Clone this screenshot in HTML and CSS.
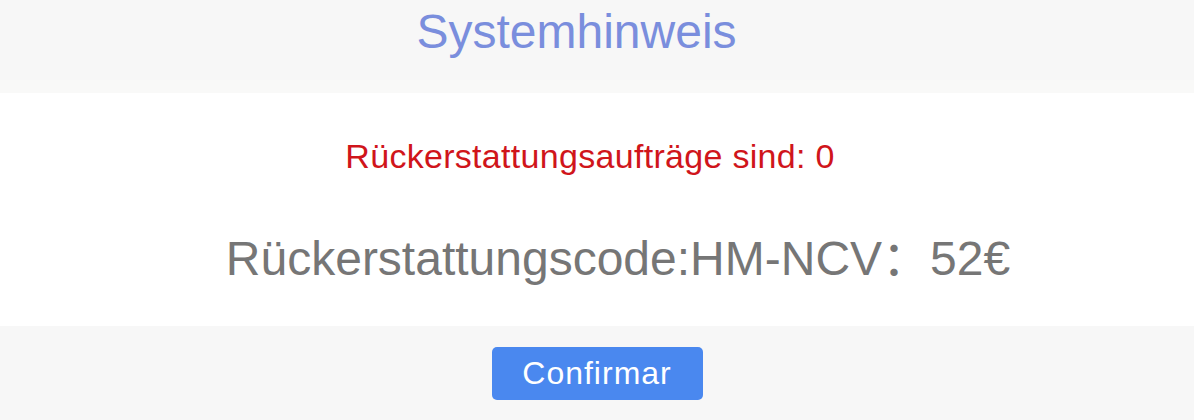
FILE: index.html
```html
<!DOCTYPE html>
<html lang="de">
<head>
  <meta charset="UTF-8">
  <title>Systemhinweis</title>
  <meta name="viewport" content="width=device-width, initial-scale=1.0"/>
  <link rel="stylesheet" href="styles.css">
</head>
<body>
  <div class="dialog">
    <div class="dialog-head">
      <h2 class="title">Systemhinweis</h2>
    </div>
    <div class="dialog-body">
      <p class="notice">Rückerstattungsaufträge sind: 0</p>
      <p class="code">Rückerstattungscode:HM-NCV：52€</p>
    </div>
    <div class="dialog-foot">
      <button class="confirm">Confirmar</button>
    </div>
  </div>
</body>
</html>
```

FILE: styles.css
```css
body {
  margin: 0;
  background: #f7f7f7;
  font-family: "Liberation Sans", Arial, "Noto Sans CJK SC", sans-serif;
}
.dialog {
  width: 1194px;
  height: 420px;
  display: flex;
  flex-direction: column;
}
.dialog-head {
  height: 93px;
  box-sizing: border-box;
  padding-top: 4px;
  background: linear-gradient(#f7f7f7 0, #f7f7f7 80px, #f9f9f8 80px);
  text-align: center;
}
.title {
  margin: 0;
  padding-right: 41px;
  font-size: 48px;
  font-weight: normal;
  line-height: 55px;
  color: #7a8edd;
}
.dialog-body {
  background: #fff;
  height: 233px;
  box-sizing: border-box;
  padding-top: 43px;
  text-align: center;
}
.notice {
  margin: 0;
  padding-right: 14px;
  font-size: 34px;
  letter-spacing: 0.3px;
  line-height: 40px;
  color: #d0151b;
}
.code {
  margin: 55px 0 0;
  padding-left: 42px;
  font-size: 48px;
  line-height: 56px;
  color: #767676;
}
.dialog-foot {
  flex: 1;
  display: flex;
  justify-content: center;
  padding-top: 21px;
}
.confirm {
  width: 211px;
  height: 53px;
  border: none;
  border-radius: 5px;
  background: #4a88ef;
  color: #fff;
  font-family: inherit;
  font-size: 32px;
  letter-spacing: 1px;
  cursor: pointer;
}
```
